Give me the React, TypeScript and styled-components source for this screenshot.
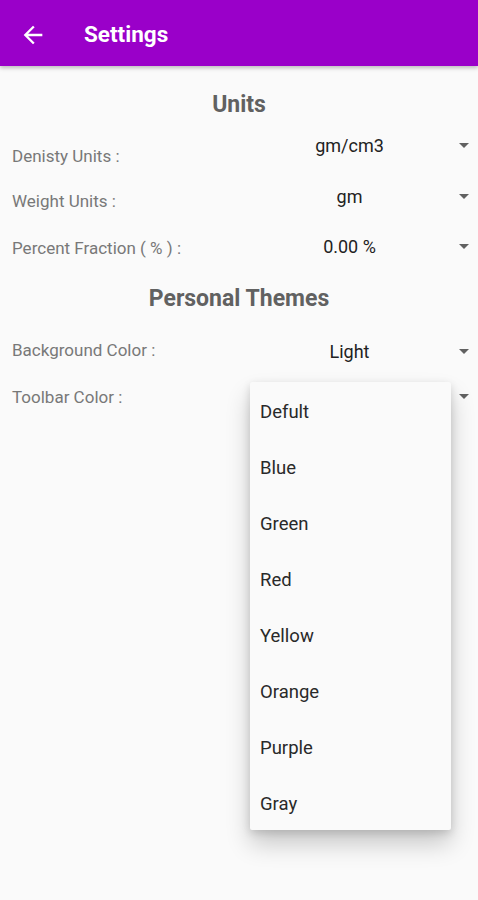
import styled, { createGlobalStyle } from "styled-components";

const Global = createGlobalStyle`
    html, body {
        margin: 0;
        padding: 0;
        background: #fafafa;
        font-family: Roboto, "Noto Sans", sans-serif;
    }
`;

const Screen = styled.div`
    width: 478px;
    height: 900px;
    background: #fafafa;
    position: relative;
    overflow: hidden;
`;

const Toolbar = styled.header`
    height: 66px;
    background: #9a00c9;
    display: flex;
    align-items: center;
    box-shadow: 0 2px 4px rgba(0, 0, 0, 0.25);
`;

const BackButton = styled.button`
    width: 28px;
    height: 28px;
    margin: 3px 0 0 19px;
    padding: 0;
    border: none;
    background: transparent;
    display: flex;
    align-items: center;
    justify-content: center;
`;

const Title = styled.h1`
    margin: 2px 0 0 37px;
    color: #ffffff;
    font-size: 22.5px;
    font-weight: 700;
`;

const Content = styled.main`
    position: relative;
    padding: 0 12px;
`;

const Heading = styled.h2<{ $top: number }>`
    margin: ${p => p.$top}px 0 0;
    height: 38px;
    line-height: 38px;
    text-align: center;
    color: #616161;
    font-size: 23px;
    font-weight: 700;
`;

const Row = styled.div`
    height: 47px;
    display: flex;
    position: relative;
`;

const Label = styled.span<{ $offset: number }>`
    width: 228px;
    padding-top: ${p => p.$offset}px;
    color: #787878;
    font-size: 17px;
    line-height: 20px;
`;

const Spinner = styled.div<{ $offset: number }>`
    flex: 1;
    display: flex;
    padding-top: ${p => p.$offset}px;
`;

const Value = styled.span`
    flex: 1;
    text-align: center;
    color: #222222;
    font-size: 18px;
    line-height: 22px;
`;

const Caret = styled.span`
    width: 0;
    height: 0;
    margin-top: 8px;
    margin-right: -3px;
    border-left: 5px solid transparent;
    border-right: 5px solid transparent;
    border-top: 5px solid #616161;
`;

const Menu = styled.ul`
    position: absolute;
    left: 250px;
    top: 382px;
    width: 201px;
    margin: 0;
    padding: 0;
    list-style: none;
    background: #fafafa;
    border-radius: 2px;
    box-shadow: 0 14px 24px rgba(0, 0, 0, 0.2), 0 3px 8px rgba(0, 0, 0, 0.14);
`;

const MenuItem = styled.li`
    height: 56px;
    line-height: 56px;
    padding: 2px 0 0 10px;
    box-sizing: border-box;
    color: #292929;
    font-size: 18.5px;
`;

interface Setting {
    label: string;
    value: string;
    labelOffset: number;
    valueOffset: number;
}

const units: Setting[] = [
    { label: "Denisty Units :", value: "gm/cm3", labelOffset: 22, valueOffset: 11 },
    { label: "Weight Units :", value: "gm", labelOffset: 20, valueOffset: 15 },
    { label: "Percent Fraction ( % ) :", value: "0.00 %", labelOffset: 20, valueOffset: 18 },
];

const themes: Setting[] = [
    { label: "Background Color :", value: "Light", labelOffset: 22, valueOffset: 23 },
    { label: "Toolbar Color :", value: "", labelOffset: 22, valueOffset: 21 },
];

const colors = ["Defult", "Blue", "Green", "Red", "Yellow", "Orange", "Purple", "Gray"];

function SettingRow({ label, value, labelOffset, valueOffset }: Setting) {
    return (
        <Row>
            <Label $offset={labelOffset}>{label}</Label>
            <Spinner $offset={valueOffset}>
                <Value>{value}</Value>
                <Caret />
            </Spinner>
        </Row>
    );
}

function App() {
    return (
        <Screen>
            <Global />
            <Toolbar>
                <BackButton>
                    <svg width="28" height="28" viewBox="0 0 24 24">
                        <path d="M20 11H7.83l5.59-5.59L12 4l-8 8 8 8 1.41-1.41L7.83 13H20v-2z" fill="#ffffff" />
                    </svg>
                </BackButton>
                <Title>Settings</Title>
            </Toolbar>
            <Content>
                <Heading $top={20}>Units</Heading>
                {units.map(s => <SettingRow key={s.label} {...s} />)}
                <Heading $top={15}>Personal Themes</Heading>
                {themes.map(s => <SettingRow key={s.label} {...s} />)}
            </Content>
            <Menu>
                {colors.map(c => <MenuItem key={c}>{c}</MenuItem>)}
            </Menu>
        </Screen>
    );
}

export default App;
